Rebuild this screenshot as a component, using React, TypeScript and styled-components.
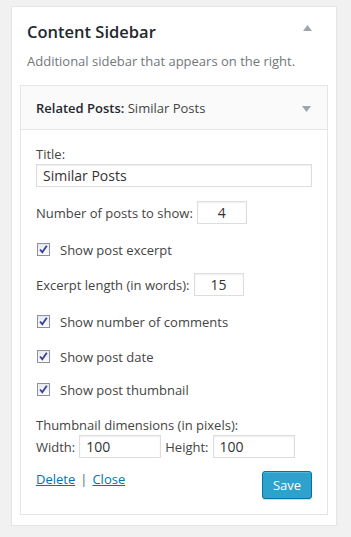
import styled, { createGlobalStyle } from "styled-components";

const GlobalStyle = createGlobalStyle`
  body {
    margin: 0;
    background: #f1f1f1;
    font-family: "Open Sans", "Noto Sans", sans-serif;
    font-size: 13px;
    color: #444;
  }
`;

const Triangle = ({ up }: { up?: boolean }) => (
    <svg width="9" height="6" viewBox="0 0 9 6">
        <path d={up ? "M4.5 0 L9 6 L0 6 Z" : "M0 0 L9 0 L4.5 6 Z"} fill="#a0a5aa" />
    </svg>
);

const CheckMark = () => (
    <svg width="11" height="11" viewBox="0 0 11 11">
        <path d="M2 5.5 L4.3 8.2 L8.8 1.8" fill="none" stroke="#34439a" strokeWidth="1.8" />
    </svg>
);

const CheckRow = ({ label, mt }: { label: string; mt: number }) => (
    <Row $mt={mt}>
        <Box><CheckMark /></Box>
        <CheckLabel>{label}</CheckLabel>
    </Row>
);

export default function App() {
    return (
        <>
            <GlobalStyle />
            <Sidebar>
                <SidebarHead>
                    <SidebarTitle>Content Sidebar</SidebarTitle>
                    <Toggle $top={-4}><Triangle up /></Toggle>
                </SidebarHead>
                <Description>Additional sidebar that appears on the right.</Description>
                <Widget>
                    <WidgetTop>
                        <WidgetTitle>Related Posts: <span>Similar Posts</span></WidgetTitle>
                        <Toggle $top={1}><Triangle /></Toggle>
                    </WidgetTop>
                    <WidgetInside>
                        <Label>Title:</Label>
                        <TextInput $width={276} $mt={1} defaultValue="Similar Posts" />

                        <Row $mt={14}>
                            <Label>Number of posts to show:</Label>
                            <TextInput $width={50} $center defaultValue="4" />
                        </Row>

                        <CheckRow label="Show post excerpt" mt={14} />

                        <Row $mt={12}>
                            <Label>Excerpt length (in words):</Label>
                            <TextInput $width={50} $center defaultValue="15" />
                        </Row>

                        <CheckRow label="Show number of comments" mt={14} />
                        <CheckRow label="Show post date" mt={12} />
                        <CheckRow label="Show post thumbnail" mt={10} />

                        <Label $mt={15}>Thumbnail dimensions (in pixels):</Label>
                        <Row $mt={1}>
                            <Label>Width:</Label>
                            <TextInput $width={82} defaultValue="100" />
                            <Label>Height:</Label>
                            <TextInput $width={82} defaultValue="100" />
                        </Row>

                        <Footer>
                            <Links>
                                <Link href="#">Delete</Link>
                                <Sep>|</Sep>
                                <Link href="#">Close</Link>
                            </Links>
                            <SaveButton>Save</SaveButton>
                        </Footer>
                    </WidgetInside>
                </Widget>
            </Sidebar>
        </>
    );
}

const Sidebar = styled.div`
  box-sizing: border-box;
  width: 326px;
  margin: 6px 0 0 11px;
  padding: 0 8px 10px;
  background: #fff;
  border: 1px solid #e5e5e5;
  box-shadow: 0 1px 1px rgba(0, 0, 0, 0.04);
`;

const SidebarHead = styled.div`
  box-sizing: border-box;
  display: flex;
  align-items: center;
  justify-content: space-between;
  height: 44px;
  padding: 5px 16px 0 7px;
`;

const SidebarTitle = styled.h2`
  margin: 0;
  font-size: 16.5px;
  font-weight: 600;
  color: #23282d;
`;

const Toggle = styled.span<{ $top: number }>`
  display: flex;
  position: relative;
  top: ${p => p.$top}px;
`;

const Description = styled.p`
  margin: 0 0 14px;
  padding: 0 7px;
  font-size: 13px;
  line-height: 20px;
  color: #72777c;
`;

const Widget = styled.div`
  border: 1px solid #e5e5e5;
  background: #fff;
`;

const WidgetTop = styled.div`
  display: flex;
  align-items: center;
  justify-content: space-between;
  height: 43px;
  padding: 0 16px 0 15px;
  background: #fafafa;
  border-bottom: 1px solid #e5e5e5;
`;

const WidgetTitle = styled.h3`
  margin: 0;
  font-size: 13px;
  font-weight: 600;
  color: #23282d;

  span {
    font-weight: 400;
    color: #444;
  }
`;

const WidgetInside = styled.div`
  display: flex;
  flex-direction: column;
  align-items: flex-start;
  padding: 15px 15px 15px;
`;

const Label = styled.label<{ $mt?: number }>`
  display: block;
  margin-top: ${p => p.$mt || 0}px;
  font-size: 13px;
  line-height: 18px;
  color: #444;
`;

const TextInput = styled.input<{ $width: number; $mt?: number; $center?: boolean }>`
  box-sizing: border-box;
  width: ${p => p.$width}px;
  height: 23px;
  margin: ${p => p.$mt || 0}px 0 0;
  padding: 0 6px;
  border: 1px solid #ddd;
  box-shadow: inset 0 1px 2px rgba(0, 0, 0, 0.07);
  font-family: "Open Sans", "Noto Sans", sans-serif;
  font-size: 14px;
  color: #333;
  text-align: ${p => (p.$center ? "center" : "left")};
  outline: none;
`;

const Row = styled.div<{ $mt: number }>`
  display: flex;
  align-items: center;
  gap: 4px;
  height: 23px;
  margin-top: ${p => p.$mt}px;
`;

const Box = styled.span`
  display: flex;
  align-items: center;
  justify-content: center;
  box-sizing: border-box;
  width: 13px;
  height: 13px;
  margin: 0 6px 0 1px;
  border: 1px solid #8f8f9d;
  background: linear-gradient(#e9e9ee, #fbfbfc);
`;

const CheckLabel = styled.span`
  font-size: 13px;
  color: #444;
`;

const Footer = styled.div`
  display: flex;
  justify-content: space-between;
  align-self: stretch;
  margin-top: 13px;
`;

const Links = styled.div`
  display: flex;
  gap: 5px;
  margin-top: -1px;
  line-height: 18px;
`;

const Link = styled.a`
  color: #0073aa;
  text-decoration: underline;
`;

const Sep = styled.span`
  color: #666;
`;

const SaveButton = styled.button`
  width: 50px;
  height: 28px;
  padding: 0;
  border: 1px solid #0074a2;
  border-radius: 3px;
  background: #2ea2cc;
  box-shadow: inset 0 1px 0 rgba(120, 200, 230, 0.5), 0 1px 0 rgba(0, 0, 0, 0.15);
  color: #fff;
  font-family: "Open Sans", "Noto Sans", sans-serif;
  font-size: 13px;
`;
